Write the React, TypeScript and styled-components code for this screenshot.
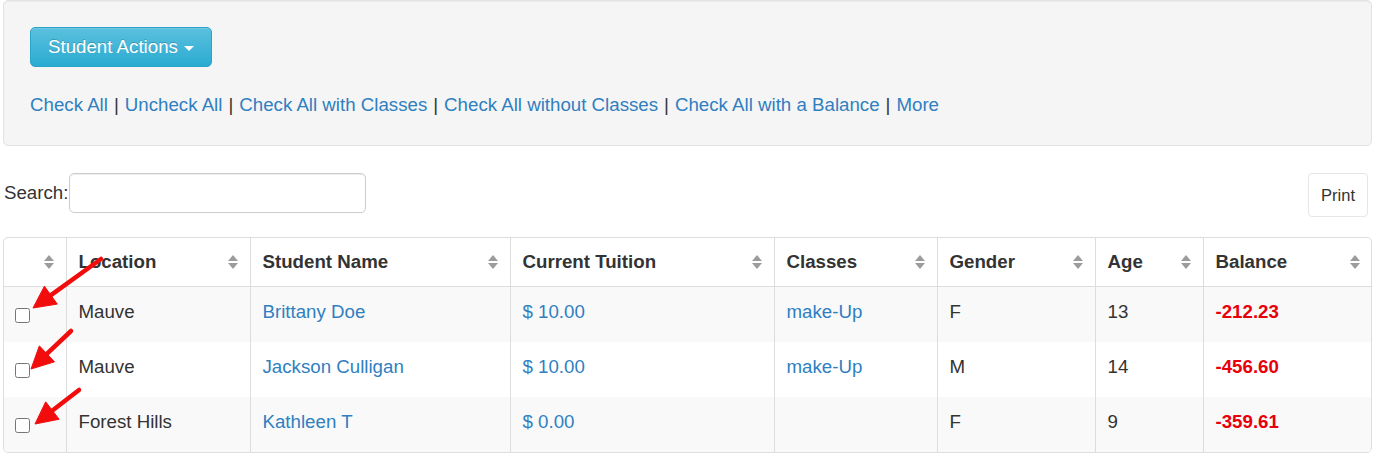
import React from "react";
import styled, { createGlobalStyle } from "styled-components";

const GlobalStyle = createGlobalStyle`
  body {
    margin: 0;
    background: #fff;
    font-family: "Liberation Sans", Arial, sans-serif;
    color: #333;
  }
`;

const Page = styled.div`
  padding: 0 14px 12px 3px;
  font-size: 18.7px;
`;

const Well = styled.div`
  background: #f5f5f5;
  border: 1px solid #e3e3e3;
  border-radius: 5px;
  padding: 26px 26px 27px;
  box-shadow: inset 0 1px 1px rgba(0, 0, 0, 0.04);
`;

const ActionButton = styled.button`
  display: inline-flex;
  align-items: center;
  gap: 6px;
  height: 40px;
  padding: 0 17px;
  font-family: inherit;
  font-size: 18.7px;
  color: #fff;
  background: linear-gradient(to bottom, #5bc0de 0%, #2aabd2 100%);
  border: 1px solid #28a4c9;
  border-radius: 5px;
  box-shadow: inset 0 1px 0 rgba(255, 255, 255, 0.15);
  text-shadow: 0 -1px 0 rgba(0, 0, 0, 0.2);
  cursor: pointer;
`;

const Caret = styled.span`
  width: 0;
  height: 0;
  border-left: 5px solid transparent;
  border-right: 5px solid transparent;
  border-top: 5px solid #fff;
  margin-top: 2px;
`;

const LinkLine = styled.div`
  margin-top: 25px;
  line-height: 26px;
`;

const Link = styled.a`
  color: #2f7fc1;
  text-decoration: none;
  cursor: pointer;
`;

const Sep = styled.span`
  color: #333;
  margin: 0 6px;
`;

const SearchRow = styled.div`
  display: flex;
  justify-content: space-between;
  align-items: flex-start;
  margin-top: 27px;
  padding-left: 1px;
`;

const SearchLabel = styled.label`
  display: flex;
  align-items: center;
  gap: 1px;
  height: 40px;
`;

const SearchInput = styled.input`
  width: 297px;
  height: 40px;
  box-sizing: border-box;
  border: 1px solid #ccc;
  border-radius: 5px;
  box-shadow: inset 0 1px 1px rgba(0, 0, 0, 0.075);
  padding: 6px 10px;
  font-size: 18px;
  font-family: inherit;
`;

const PrintButton = styled.button`
  height: 44px;
  padding: 0 12px;
  margin-right: 4px;
  background: #fff;
  border: 1px solid #e6e6e6;
  border-radius: 4px;
  font-family: inherit;
  font-size: 16.5px;
  color: #333;
  cursor: pointer;
`;

const TableWrap = styled.div`
  position: relative;
  margin-top: 20px;
  border: 1px solid #ddd;
  border-radius: 5px;
  overflow: hidden;
`;

const Table = styled.table`
  width: 100%;
  table-layout: fixed;
  border-collapse: collapse;
`;

const Th = styled.th`
  text-align: left;
  font-weight: bold;
  line-height: 26px;
  padding: 11px 12px 11px 12px;
  border-left: 1px solid #ddd;
  border-bottom: 1px solid #ddd;
  color: #333;
  &:first-child {
    border-left: none;
  }
`;

const ThInner = styled.div`
  display: flex;
  align-items: center;
  justify-content: space-between;
`;

const Row = styled.tr<{ $striped: boolean }>`
  background: ${(p) => (p.$striped ? "#f9f9f9" : "#fff")};
  & + & td {
    border-top: 1px solid #ddd;
  }
`;

const Td = styled.td`
  line-height: 26px;
  padding: 12px 12px 17px;
  border-left: 1px solid #ddd;
  vertical-align: top;
  &:first-child {
    border-left: none;
    padding-left: 11px;
  }
`;

const CellLink = styled.a`
  color: #2f7fc1;
  text-decoration: none;
`;

const Balance = styled.span`
  color: #e8000b;
  font-weight: bold;
`;

const Check = styled.input`
  width: 15px;
  height: 15px;
  margin: 0;
  vertical-align: -5px;
`;

const Overlay = styled.svg`
  position: absolute;
  left: 0;
  top: 0;
  pointer-events: none;
`;

const SortIcon = () => (
  <svg width="10" height="14" viewBox="0 0 10 14">
    <path d="M5 0 L10 6 L0 6 Z" fill="#9c9c9c" />
    <path d="M5 14 L10 8 L0 8 Z" fill="#9c9c9c" />
  </svg>
);

const Arrow: React.FC<{ x1: number; y1: number; x2: number; y2: number }> = ({
  x1,
  y1,
  x2,
  y2,
}) => {
  const len = Math.hypot(x2 - x1, y2 - y1);
  const dx = (x2 - x1) / len;
  const dy = (y2 - y1) / len;
  const head = 22;
  const half = 11;
  const bx = x2 - dx * head;
  const by = y2 - dy * head;
  const pts = [
    [x2, y2],
    [bx - dy * half, by + dx * half],
    [bx + dy * half, by - dx * half],
  ]
    .map((p) => p.join(","))
    .join(" ");
  return (
    <g fill="#f20d0d" stroke="#f20d0d">
      <line
        x1={x1}
        y1={y1}
        x2={bx + dx * 2}
        y2={by + dy * 2}
        strokeWidth="4.5"
        strokeLinecap="round"
      />
      <polygon points={pts} strokeWidth="1" strokeLinejoin="round" />
    </g>
  );
};

const columns = [
  { label: "", width: 62 },
  { label: "Location", width: 184 },
  { label: "Student Name", width: 260 },
  { label: "Current Tuition", width: 264 },
  { label: "Classes", width: 163 },
  { label: "Gender", width: 158 },
  { label: "Age", width: 108 },
  { label: "Balance", width: 169 },
];

const students = [
  { location: "Mauve", name: "Brittany Doe", tuition: "$ 10.00", classes: "make-Up", gender: "F", age: 13, balance: "-212.23" },
  { location: "Mauve", name: "Jackson Culligan", tuition: "$ 10.00", classes: "make-Up", gender: "M", age: 14, balance: "-456.60" },
  { location: "Forest Hills", name: "Kathleen T", tuition: "$ 0.00", classes: "", gender: "F", age: 9, balance: "-359.61" },
];

// arrows in table-wrapper coordinates: tail -> tip
const arrows = [
  { x1: 97, y1: 21, x2: 29, y2: 70 },
  { x1: 67, y1: 93, x2: 27, y2: 131 },
  { x1: 75, y1: 152, x2: 31, y2: 186 },
];

const links = [
  "Check All",
  "Uncheck All",
  "Check All with Classes",
  "Check All without Classes",
  "Check All with a Balance",
  "More",
];

const App: React.FC = () => {
  return (
    <Page>
      <GlobalStyle />
      <Well>
        <ActionButton>
          Student Actions <Caret />
        </ActionButton>
        <LinkLine>
          {links.map((l, i) => (
            <React.Fragment key={l}>
              {i > 0 && <Sep>|</Sep>}
              <Link>{l}</Link>
            </React.Fragment>
          ))}
        </LinkLine>
      </Well>

      <SearchRow>
        <SearchLabel>
          Search:
          <SearchInput type="search" />
        </SearchLabel>
        <PrintButton>Print</PrintButton>
      </SearchRow>

      <TableWrap>
        <Table>
          <colgroup>
            {columns.map((c, i) => (
              <col key={i} style={{ width: c.width }} />
            ))}
          </colgroup>
          <thead>
            <tr>
              {columns.map((c, i) => (
                <Th key={i}>
                  <ThInner>
                    <span>{c.label}</span>
                    <SortIcon />
                  </ThInner>
                </Th>
              ))}
            </tr>
          </thead>
          <tbody>
            {students.map((s, i) => (
              <Row key={s.name} $striped={i % 2 === 0}>
                <Td>
                  <Check type="checkbox" />
                </Td>
                <Td>{s.location}</Td>
                <Td>
                  <CellLink>{s.name}</CellLink>
                </Td>
                <Td>
                  <CellLink>{s.tuition}</CellLink>
                </Td>
                <Td>{s.classes && <CellLink>{s.classes}</CellLink>}</Td>
                <Td>{s.gender}</Td>
                <Td>{s.age}</Td>
                <Td>
                  <Balance>{s.balance}</Balance>
                </Td>
              </Row>
            ))}
          </tbody>
        </Table>
        <Overlay width="140" height="220">
          {arrows.map((a, i) => (
            <Arrow key={i} {...a} />
          ))}
        </Overlay>
      </TableWrap>
    </Page>
  );
};

export default App;
